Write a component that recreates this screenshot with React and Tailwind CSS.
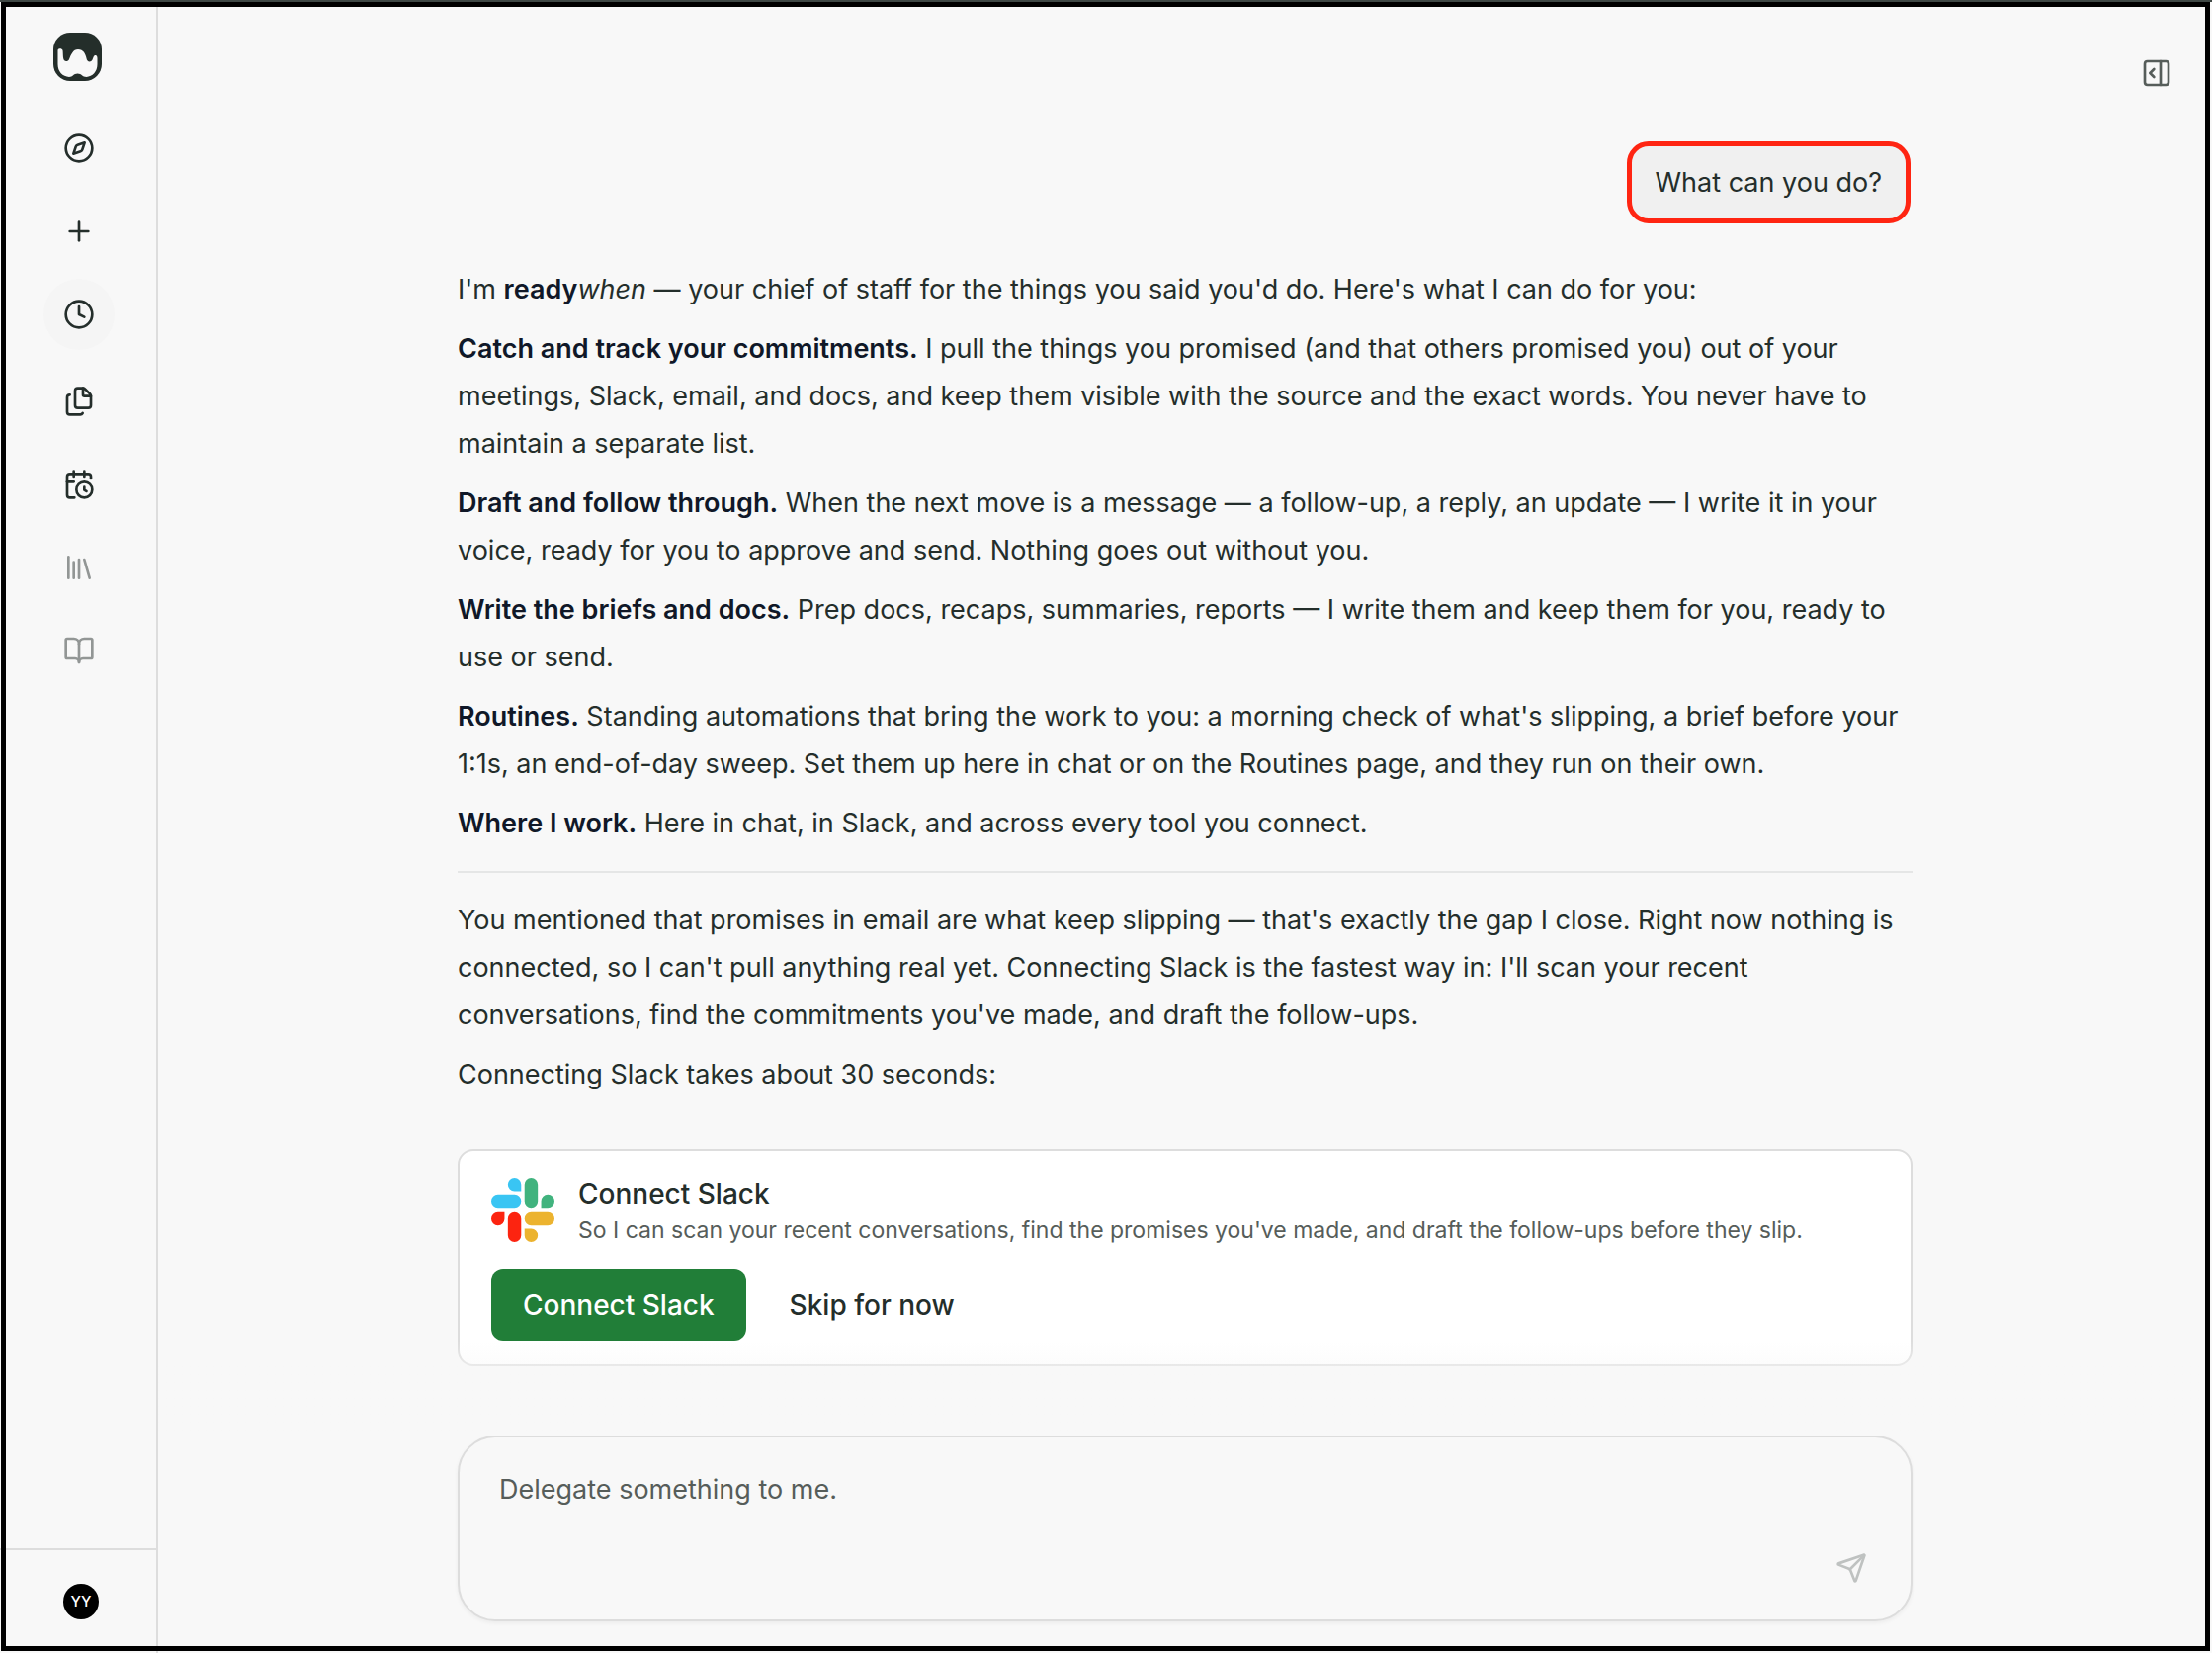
import React from "react";
import {
  Compass,
  Plus,
  Clock,
  Files,
  CalendarClock,
  Library,
  BookOpen,
  PanelRightOpen,
  Send,
} from "lucide-react";

function Logo() {
  return (
    <svg viewBox="0 0 98 98" className="size-[49px]" aria-hidden="true">
      <rect width="98" height="98" rx="34" fill="#242e2a" />
      <path
        fill="#f8f8f8"
        d="M9 36 C9 31 18 31 19 36 C20 43 19 52 22 56 C24 59 30 59 32 54 C36 44 40 34 50 34 C61 34 65 43 67 52 C68 60 76 61 79 55 C81 51 81 47 84 46 C88 45 89 49 89 52 L89 64 C89 79 79 89 67 90 C59 90 57 83 49 83 C41 83 39 90 32 90 C19 89 9 79 9 64 Z"
      />
    </svg>
  );
}

function SlackMark() {
  return (
    <svg viewBox="0 0 24 24" className="size-16 shrink-0" aria-hidden="true">
      <path fill="#fc2410" d="M5.042 15.165a2.528 2.528 0 0 1-2.52 2.523A2.528 2.528 0 0 1 0 15.165a2.527 2.527 0 0 1 2.522-2.52h2.52v2.52zM6.313 15.165a2.527 2.527 0 0 1 2.521-2.52 2.527 2.527 0 0 1 2.521 2.52v6.313A2.528 2.528 0 0 1 8.834 24a2.528 2.528 0 0 1-2.521-2.522v-6.313z" />
      <path fill="#39c5f3" d="M8.834 5.042a2.528 2.528 0 0 1-2.521-2.52A2.528 2.528 0 0 1 8.834 0a2.528 2.528 0 0 1 2.521 2.522v2.52H8.834zM8.834 6.313a2.528 2.528 0 0 1 2.521 2.521 2.528 2.528 0 0 1-2.521 2.521H2.522A2.528 2.528 0 0 1 0 8.834a2.528 2.528 0 0 1 2.522-2.521h6.312z" />
      <path fill="#41b37e" d="M18.956 8.834a2.528 2.528 0 0 1 2.522-2.521A2.528 2.528 0 0 1 24 8.834a2.528 2.528 0 0 1-2.522 2.521h-2.522V8.834zM17.688 8.834a2.528 2.528 0 0 1-2.523 2.521 2.527 2.527 0 0 1-2.52-2.521V2.522A2.527 2.527 0 0 1 15.165 0a2.528 2.528 0 0 1 2.523 2.522v6.312z" />
      <path fill="#ecb32f" d="M15.165 18.956a2.528 2.528 0 0 1 2.523 2.522A2.528 2.528 0 0 1 15.165 24a2.527 2.527 0 0 1-2.52-2.522v-2.522h2.52zM15.165 17.688a2.527 2.527 0 0 1-2.52-2.523 2.526 2.526 0 0 1 2.52-2.52h6.313A2.527 2.527 0 0 1 24 15.165a2.528 2.528 0 0 1-2.522 2.523h-6.313z" />
    </svg>
  );
}

const navItems = [
  { label: "Explore", Icon: Compass },
  { label: "New", Icon: Plus },
  { label: "History", Icon: Clock, active: true },
  { label: "Documents", Icon: Files },
  { label: "Routines", Icon: CalendarClock },
  { label: "Library", Icon: Library, muted: true },
  { label: "Guide", Icon: BookOpen, muted: true },
];

function Sidebar() {
  return (
    <aside className="flex w-40 shrink-0 flex-col border-r-2 border-[#dddddd]">
      <a href="#home" aria-label="Home" className="mt-[33px] ml-[54px] self-start">
        <Logo />
      </a>
      <nav className="mt-8 ml-11 flex flex-col items-start gap-3">
        {navItems.map(({ label, Icon, active, muted }) => (
          <button
            key={label}
            type="button"
            aria-label={label}
            className={
              "flex size-[72px] items-center justify-center rounded-full " +
              (active ? "mb-1 bg-[#f5f5f5] " : "") +
              (muted ? "text-[#929695]" : "text-[#242e2b]")
            }
          >
            <Icon size={32} strokeWidth={2} />
          </button>
        ))}
      </nav>
      <div className="mt-auto flex h-[106px] border-t-2 border-[#dddddd] pt-[34px] pl-16">
        <button
          type="button"
          aria-label="Account"
          className="flex size-9 items-center justify-center rounded-full bg-black text-[15px] font-medium text-white"
        >
          YY
        </button>
      </div>
    </aside>
  );
}

function Lead({ children }) {
  return <strong className="font-semibold text-[#101828]">{children}</strong>;
}

function Answer() {
  return (
    <div className="mt-[43px] flex flex-col gap-3 text-[27px] leading-12">
      <p>
        I'm <Lead>ready</Lead>
        <em>when</em> — your chief of staff for the things you said you'd do. Here's what I can do for you:
      </p>
      <p>
        <Lead>Catch and track your commitments.</Lead> I pull the things you promised (and that others
        promised you) out of your meetings, Slack, email, and docs, and keep them visible with the source
        and the exact words. You never have to maintain a separate list.
      </p>
      <p>
        <Lead>Draft and follow through.</Lead> When the next move is a message — a follow-up, a reply, an
        update — I write it in your voice, ready for you to approve and send. Nothing goes out without you.
      </p>
      <p>
        <Lead>Write the briefs and docs.</Lead> Prep docs, recaps, summaries, reports — I write them and
        keep them for you, ready to use or send.
      </p>
      <p>
        <Lead>Routines.</Lead> Standing automations that bring the work to you: a morning check of what's
        slipping, a brief before your 1:1s, an end-of-day sweep. Set them up here in chat or on the
        Routines page, and they run on their own.
      </p>
      <p>
        <Lead>Where I work.</Lead> Here in chat, in Slack, and across every tool you connect.
      </p>
      <hr className="my-3 border-t-2 border-[#e5e6e6]" />
      <p>
        You mentioned that promises in email are what keep slipping — that's exactly the gap I close. Right
        now nothing is connected, so I can't pull anything real yet. Connecting Slack is the fastest way
        in: I'll scan your recent conversations, find the commitments you've made, and draft the
        follow-ups.
      </p>
      <p>Connecting Slack takes about 30 seconds:</p>
    </div>
  );
}

function ConnectCard() {
  return (
    <section className="mt-[51px] rounded-2xl border-2 border-[#dddddd] bg-white px-8 pt-7 pb-6">
      <div className="flex items-start gap-6">
        <SlackMark />
        <div>
          <h2 className="text-[28px] leading-8 font-medium">Connect Slack</h2>
          <p className="text-[23px] leading-10 text-[#565d5a]">
            So I can scan your recent conversations, find the promises you've made, and draft the
            follow-ups before they slip.
          </p>
        </div>
      </div>
      <div className="mt-5 flex gap-4 text-[28px] font-medium">
        <button type="button" className="h-[72px] rounded-xl bg-[#217e38] px-8 text-white">
          Connect Slack
        </button>
        <button type="button" className="h-[72px] rounded-xl px-7">
          Skip for now
        </button>
      </div>
    </section>
  );
}

function Composer() {
  return (
    <div className="relative z-10 shrink-0 px-8 pb-8">
      <div className="pointer-events-none absolute inset-x-0 bottom-full h-24 bg-linear-to-t from-[#f8f8f8] from-40% to-transparent" />
      <form className="mx-auto flex h-[188px] max-w-[1472px] flex-col rounded-[38px] border-2 border-[#dddddd] bg-[#f8f8f8] px-10 pt-[29px] shadow-[0_2px_4px_rgba(0,0,0,0.05)]">
        <textarea
          aria-label="Message"
          rows={1}
          placeholder="Delegate something to me."
          className="w-full resize-none bg-transparent text-[27px] leading-12 outline-none placeholder:text-[#565d5a]"
        />
        <button type="button" aria-label="Send" className="mt-auto mr-1 mb-9 self-end text-[#bfc2c1]">
          <Send size={32} strokeWidth={2} />
        </button>
      </form>
    </div>
  );
}

export default function App() {
  return (
    <div className="relative flex h-screen overflow-hidden bg-[#f8f8f8] font-['Inter','Liberation_Sans',sans-serif] text-[#242e2b]">
      <Sidebar />
      <main className="relative flex min-w-0 flex-1 flex-col">
        <button
          type="button"
          aria-label="Open panel"
          className="absolute top-[58px] right-10 text-[#565d5a]"
        >
          <PanelRightOpen size={32} strokeWidth={2} />
        </button>
        <div className="min-h-0 flex-1 overflow-hidden px-8 pt-[143px]">
          <div className="mx-auto flex max-w-[1472px] flex-col">
            <p className="mr-[2px] self-end rounded-[22px] border-5 border-[#ff2512] bg-[#f0f0f0] px-6 py-4 text-[27px] leading-[41px]">
              What can you do?
            </p>
            <Answer />
            <ConnectCard />
          </div>
        </div>
        <Composer />
      </main>
      <div className="pointer-events-none absolute inset-x-0 top-0 z-20 h-[2px] bg-[#3f4845]" />
      <div className="pointer-events-none absolute top-[2px] right-[2px] bottom-[2px] left-px z-20 border-5 border-black" />
    </div>
  );
}
